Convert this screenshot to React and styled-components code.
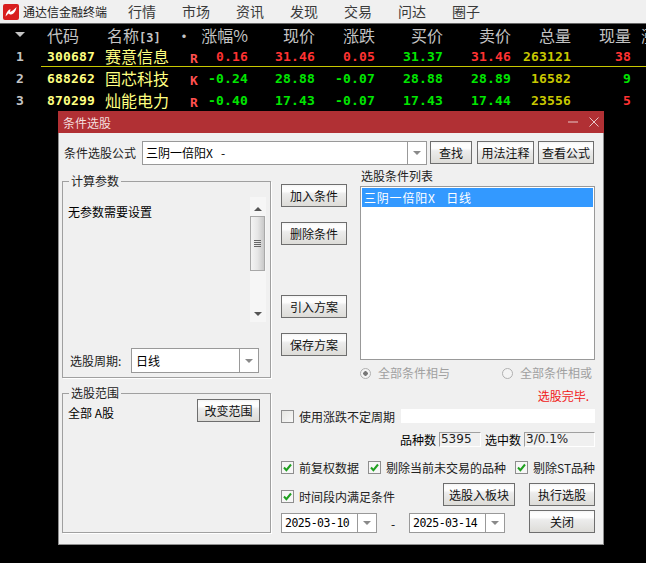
import React from 'react'
import styled, { createGlobalStyle } from 'styled-components'

const columns = '41px 54px 73px 22px 58px 67px 60px 68px 68px 60px 60px 15px'

const headers = [
  { text: '', align: 'center' },
  { text: '代码', align: 'left', pad: 6 },
  { text: '名称', align: 'left', pad: 12, count: '[3]' },
  { text: '•', align: 'left', pad: 8 },
  { text: '涨幅%', align: 'right' },
  { text: '现价', align: 'right' },
  { text: '涨跌', align: 'right' },
  { text: '买价', align: 'right' },
  { text: '卖价', align: 'right' },
  { text: '总量', align: 'right' },
  { text: '现量', align: 'right' },
  { text: '涨', align: 'left', pad: 10, clip: true },
]

const RED = '#ff3232'
const GREEN = '#00e600'

const stocks = [
  { no: 1, code: '300687', name: '赛意信息', flag: 'R', pct: '0.16', price: '31.46', change: '0.05', bid: '31.37', ask: '31.46', vol: '263121', cur: '38', main: RED, changeColor: RED, bidColor: GREEN, askColor: RED, curColor: RED, selected: true },
  { no: 2, code: '688262', name: '国芯科技', flag: 'K', pct: '-0.24', price: '28.88', change: '-0.07', bid: '28.88', ask: '28.89', vol: '16582', cur: '9', main: GREEN, changeColor: GREEN, bidColor: GREEN, askColor: GREEN, curColor: GREEN },
  { no: 3, code: '870299', name: '灿能电力', flag: 'R', pct: '-0.40', price: '17.43', change: '-0.07', bid: '17.43', ask: '17.44', vol: '23556', cur: '5', main: GREEN, changeColor: GREEN, bidColor: GREEN, askColor: GREEN, curColor: RED },
]

const menus = ['行情', '市场', '资讯', '发现', '交易', '问达', '圈子']

const Global = createGlobalStyle`
  html, body { margin: 0; padding: 0; background: #000; }
  body { width: 646px; height: 563px; overflow: hidden; font-family: "Noto Sans CJK SC", "Liberation Sans", sans-serif; }
`

const Page = styled.div`
  position: relative;
  width: 646px;
  height: 563px;
  background: #000;
  overflow: hidden;
`

const TopBar = styled.div`
  display: flex;
  align-items: center;
  height: 23px;
  background: #f0f0f0;
  border-bottom: 1px solid #666;
  padding-left: 3px;
`

const Logo = styled.svg`
  width: 16px;
  height: 16px;
  margin-right: 4px;
`

const AppName = styled.span`
  font-size: 12px;
  color: #222;
  margin-right: 21px;
  line-height: 23px;
`

const MenuItem = styled.span`
  font-size: 14px;
  line-height: 23px;
  color: #3a3a3a;
  width: 54px;
`

const Row = styled.div`
  display: grid;
  grid-template-columns: ${columns};
  height: ${p => p.$height}px;
  align-items: center;
  font-size: 16px;
`

const HeadCell = styled.div`
  color: #c4c4c4;
  font-size: 16px;
  line-height: 20px;
  text-align: ${p => p.$align};
  padding-left: ${p => p.$pad || 0}px;
  white-space: nowrap;
  overflow: ${p => (p.$clip ? 'hidden' : 'visible')};
`

const Count = styled.span`
  font: bold 12px "DejaVu Sans Mono", monospace;
`

const SortArrow = styled.i`
  display: block;
  width: 0;
  height: 0;
  margin-left: 15px;
  border-left: 5px solid transparent;
  border-right: 5px solid transparent;
  border-top: 5px solid #c4c4c4;
`

const DataRow = styled(Row)`
  position: relative;
  ${p => p.$selected && `
    &::after {
      content: '';
      position: absolute;
      left: 41px;
      right: 0;
      bottom: 0;
      height: 1px;
      background: #c8c800;
    }
  `}
`

const Num = styled.div`
  font: bold 13px "DejaVu Sans Mono", monospace;
  letter-spacing: 0.17px;
  color: ${p => p.$color};
  text-align: right;
  white-space: nowrap;
`

const Index = styled(Num)`
  text-align: left;
  padding-left: 16px;
  color: #c4c4c4;
`

const Name = styled.div`
  color: #ffff80;
  font-size: 16px;
  line-height: 20px;
  padding-left: 10px;
  white-space: nowrap;
`

const Flag = styled.div`
  font: bold 13px "DejaVu Sans Mono", monospace;
  color: #ff5050;
  padding: 5px 0 0 22px;
  width: 0;
`

const Dialog = styled.div`
  position: absolute;
  left: 58px;
  top: 111px;
  width: 546px;
  height: 434px;
  box-sizing: border-box;
  background: #f0f0f0;
  border: 1px solid #8f8f8f;
  border-top: 0;
  color: #000;
  font-size: 12px;
`

const TitleBar = styled.div`
  display: flex;
  align-items: center;
  justify-content: space-between;
  height: 22px;
  margin: 0 -1px;
  padding: 0 4px 0 5px;
  background: #b13034;
  color: #f4dede;
  font-size: 12px;
`

const TitleIcons = styled.svg`
  width: 34px;
  height: 12px;
`

const Body = styled.div`
  position: relative;
  padding: 8px 9px 0 3px;
`

const FormulaRow = styled.div`
  display: flex;
  align-items: flex-start;
  height: 26px;
`

const FormulaLabel = styled.span`
  width: 81px;
  padding-left: 2px;
  box-sizing: border-box;
  line-height: 24px;
  color: #222;
`

const Combo = styled.div`
  display: flex;
  box-sizing: border-box;
  width: ${p => p.$width}px;
  height: ${p => p.$height}px;
  background: #fff;
  border: 1px solid #999;
  margin-right: ${p => p.$gap || 0}px;
  flex: none;
`

const ComboText = styled.span`
  flex: 1;
  padding-left: ${p => p.$pad || 3}px;
  line-height: ${p => p.$height - 2}px;
  font-size: 12px;
  white-space: pre;
`

const ComboButton = styled.span`
  display: flex;
  align-items: center;
  justify-content: center;
  width: 18px;
  border-left: 1px solid #999;
  &::before {
    content: '';
    border-left: 4px solid transparent;
    border-right: 4px solid transparent;
    border-top: 4px solid #8a8a8a;
  }
`

const Button = styled.button`
  display: block;
  box-sizing: border-box;
  flex: none;
  width: ${p => p.$width}px;
  height: 23px;
  padding: 0;
  margin: ${p => p.$margin || 0};
  border: 1px solid #6e6e6e;
  border-radius: 0;
  background: linear-gradient(#f4f4f4 0, #fdfdfd 12%, #fdfdfd 30%, #ececec 42%, #dddcd8 100%);
  color: #111;
  font: 12px "Noto Sans CJK SC", sans-serif;
  line-height: 20px;
`

const Columns = styled.div`
  display: flex;
  margin-top: 8px;
`

const LeftColumn = styled.div`
  width: 209px;
  margin-right: 10px;
  flex: none;
`

const Group = styled.fieldset`
  position: relative;
  box-sizing: border-box;
  width: 209px;
  height: ${p => p.$height}px;
  margin: ${p => p.$top || 0}px 0 0;
  padding: 0;
  border: 1px solid #a0a0a0;
  box-shadow: 1px 1px 0 #fff;
`

const Legend = styled.legend`
  margin-left: 6px;
  padding: 0 2px;
  font-size: 12px;
  line-height: 12px;
  color: #222;
`

const ParamHint = styled.div`
  padding: 18px 0 0 5px;
  line-height: 14px;
`

const ScrollBar = styled.div`
  position: absolute;
  left: 187px;
  top: 10px;
  width: 16px;
  height: 125px;
  background: #f6f6f6;
`

const ScrollArrow = styled.i`
  position: absolute;
  left: 4px;
  ${p => (p.$down ? 'bottom: 6px;' : 'top: 10px;')}
  border-left: 4px solid transparent;
  border-right: 4px solid transparent;
  ${p => (p.$down ? 'border-top' : 'border-bottom')}: 4px solid #555;
`

const ScrollThumb = styled.div`
  position: absolute;
  left: 0;
  top: 19px;
  width: 15px;
  height: 55px;
  box-sizing: border-box;
  border: 1px solid #a8a8a8;
  background: linear-gradient(90deg, #f4f4f4, #e6e6e6 50%, #c8c8c8);
  &::after {
    content: '';
    position: absolute;
    left: 3px;
    top: 23px;
    width: 7px;
    height: 7px;
    background: repeating-linear-gradient(#666 0 1px, transparent 1px 2px);
  }
`

const PeriodRow = styled.div`
  position: absolute;
  left: 7px;
  bottom: 4px;
  display: flex;
  align-items: center;
`

const PeriodLabel = styled.span`
  width: 61px;
  color: #222;
`

const RangeRow = styled.div`
  display: flex;
  align-items: center;
  justify-content: space-between;
  padding: 0 10px 0 5px;
`

const RangeLabel = styled.span`
  padding-top: 3px;
`

const RightColumn = styled.div`
  width: 314px;
  flex: none;
`

const TopPart = styled.div`
  display: flex;
`

const SideButtons = styled.div`
  width: 79px;
  flex: none;
  padding-top: 9px;
`

const ListPart = styled.div`
  width: 235px;
`

const ListTitle = styled.div`
  line-height: 12px;
  margin: -5px 0 4px 1px;
  color: #222;
`

const List = styled.div`
  box-sizing: border-box;
  height: 174px;
  background: #fff;
  border: 1px solid #999;
  padding: 1px;
`

const ListItem = styled.div`
  height: 19px;
  line-height: 19px;
  padding-left: 2px;
  background: #3399ff;
  color: #fff;
  letter-spacing: 0.8px;
  white-space: pre;
`

const RadioRow = styled.div`
  display: flex;
  justify-content: space-between;
  margin-top: 6px;
  padding: 0 3px 0 79px;
  height: 14px;
  line-height: 14px;
`

const RadioItem = styled.label`
  display: flex;
  align-items: center;
  gap: 7px;
  color: #a0a0a0;
`

const RadioDot = styled.i`
  box-sizing: border-box;
  width: 11px;
  height: 11px;
  border-radius: 50%;
  border: 1px solid #b0b0b0;
  background: ${p => (p.$on ? 'radial-gradient(circle, #777 0 2px, #f4f4f4 2.5px)' : '#f4f4f4')};
`

const DoneText = styled.div`
  text-align: right;
  color: #f01818;
  line-height: 14px;
  margin-top: 9px;
  padding-right: 6px;
`

const Line = styled.div`
  display: flex;
  align-items: center;
  height: 14px;
  margin-top: ${p => p.$top}px;
  white-space: nowrap;
`

const CheckItem = styled.label`
  display: flex;
  align-items: center;
  color: #222;
  margin-right: ${p => p.$gap || 0}px;
  flex: none;
`

const CheckBox = styled.span`
  display: flex;
  align-items: center;
  justify-content: center;
  box-sizing: border-box;
  width: 13px;
  height: 13px;
  margin-right: 5px;
  border: 1px solid #8e8e8e;
  background: ${p => (p.$checked ? '#f6f6f6' : 'linear-gradient(135deg, #e6e6e2, #f8f8f8)')};
`

const Blank = styled.div`
  width: 194px;
  height: 14px;
  margin-left: 6px;
  background: #fff;
`

const StatsRow = styled(Line)`
  justify-content: flex-end;
`

const StatBox = styled.div`
  box-sizing: border-box;
  width: ${p => p.$width}px;
  height: 15px;
  line-height: 13px;
  margin: 0 ${p => p.$gap || 0}px 0 3px;
  padding-left: 1px;
  border: 1px solid;
  border-color: #a0a0a0 #fff #fff #a0a0a0;
  font-family: "DejaVu Sans", sans-serif;
  color: #222;
`

const BottomGrid = styled.div`
  display: grid;
  grid-template-columns: 162px 86px 66px;
  grid-template-rows: 23px 23px;
  row-gap: 4px;
  margin-top: 9px;
`

const DateRow = styled.div`
  display: flex;
  grid-column: 1 / 3;
  align-items: flex-start;
  padding-top: 3px;
`

const Dash = styled.span`
  width: 32px;
  text-align: center;
  line-height: 22px;
`

const DateText = styled(ComboText)`
  font-family: "DejaVu Sans Mono", monospace;
  font-size: 11.5px;
  letter-spacing: -0.5px;
`

const Check = () => (
  <svg width="9" height="9" viewBox="0 0 9 9">
    <path d="M1 4.5 L3.4 7.2 L8 1.5" fill="none" stroke="#1fa01f" strokeWidth="2" />
  </svg>
)

const CheckOption = ({ text, checked, gap }) => (
  <CheckItem $gap={gap}>
    <CheckBox $checked={checked}>{checked && <Check />}</CheckBox>
    {text}
  </CheckItem>
)

const ComboBox = ({ text, width, height, gap, pad, date }) => {
  const Label = date ? DateText : ComboText
  return (
    <Combo $width={width} $height={height} $gap={gap}>
      <Label $height={height} $pad={pad}>{text}</Label>
      <ComboButton />
    </Combo>
  )
}

const App = () => {
  return (
    <Page>
      <Global />
      <TopBar>
        <Logo viewBox="0 0 16 16">
          <rect width="16" height="16" rx="2" fill="#d81e1e" />
          <path d="M2.5 12.5 C3 8.5 5 6 7.5 5 L7 8 C9 7.5 11 5.5 13.5 3 C13 6.5 11 10.5 8 10.5 C7 10.5 6 10 5.5 9.5 C4.5 10.5 3.5 11.5 2.5 12.5Z" fill="#fff" />
        </Logo>
        <AppName>通达信金融终端</AppName>
        {menus.map(m => <MenuItem key={m}>{m}</MenuItem>)}
      </TopBar>

      <Row $height={21}>
        {headers.map((h, i) => (
          <HeadCell key={i} $align={h.align} $pad={h.pad} $clip={h.clip}>
            {i === 0 ? <SortArrow /> : h.text}
            {h.count && <Count>{h.count}</Count>}
          </HeadCell>
        ))}
      </Row>

      {stocks.map(s => (
        <DataRow key={s.no} $height={22} $selected={s.selected}>
          <Index>{s.no}</Index>
          <Num $color="#ffff80">{s.code}</Num>
          <Name>{s.name}</Name>
          <Flag>{s.flag}</Flag>
          <Num $color={s.main}>{s.pct}</Num>
          <Num $color={s.main}>{s.price}</Num>
          <Num $color={s.changeColor}>{s.change}</Num>
          <Num $color={s.bidColor}>{s.bid}</Num>
          <Num $color={s.askColor}>{s.ask}</Num>
          <Num $color="#c8c800">{s.vol}</Num>
          <Num $color={s.curColor}>{s.cur}</Num>
        </DataRow>
      ))}

      <Dialog>
        <TitleBar>
          条件选股
          <TitleIcons viewBox="0 0 34 12">
            <path d="M2 6 H12" stroke="#e8c8c8" fill="none" />
            <path d="M23.5 1.5 L32.5 10.5 M32.5 1.5 L23.5 10.5" stroke="#e8c8c8" fill="none" />
          </TitleIcons>
        </TitleBar>
        <Body>
          <FormulaRow>
            <FormulaLabel>条件选股公式</FormulaLabel>
            <ComboBox text="三阴一倍阳X   -" width={285} height={24} gap={3} />
            <Button $width={42}>查找</Button>
            <Button $width={57} $margin="0 4px 0 5px">用法注释</Button>
            <Button $width={56}>查看公式</Button>
          </FormulaRow>

          <Columns>
            <LeftColumn>
              <Group $height={203}>
                <Legend>计算参数</Legend>
                <ParamHint>无参数需要设置</ParamHint>
                <ScrollBar>
                  <ScrollArrow />
                  <ScrollThumb />
                  <ScrollArrow $down />
                </ScrollBar>
                <PeriodRow>
                  <PeriodLabel>选股周期:</PeriodLabel>
                  <ComboBox text="日线" width={128} height={25} pad={4} />
                </PeriodRow>
              </Group>
              <Group $height={146} $top={9}>
                <Legend>选股范围</Legend>
                <RangeRow>
                  <RangeLabel>全部 A股</RangeLabel>
                  <Button $width={63}>改变范围</Button>
                </RangeRow>
              </Group>
            </LeftColumn>

            <RightColumn>
              <TopPart>
                <SideButtons>
                  <Button $width={66}>加入条件</Button>
                  <Button $width={66} $margin="15px 0 0">删除条件</Button>
                  <Button $width={66} $margin="50px 0 0">引入方案</Button>
                  <Button $width={66} $margin="15px 0 0">保存方案</Button>
                </SideButtons>
                <ListPart>
                  <ListTitle>选股条件列表</ListTitle>
                  <List>
                    <ListItem>三阴一倍阳X   日线</ListItem>
                  </List>
                </ListPart>
              </TopPart>

              <RadioRow>
                <RadioItem><RadioDot $on />全部条件相与</RadioItem>
                <RadioItem><RadioDot />全部条件相或</RadioItem>
              </RadioRow>
              <DoneText>选股完毕.</DoneText>
              <Line $top={6}>
                <CheckOption text="使用涨跌不定周期" />
                <Blank />
              </Line>
              <StatsRow $top={9}>
                品种数<StatBox $width={42} $gap={4}>5395</StatBox>
                选中数<StatBox $width={71}>3/0.1%</StatBox>
              </StatsRow>
              <Line $top={14}>
                <CheckOption text="前复权数据" checked gap={9} />
                <CheckOption text="剔除当前未交易的品种" checked gap={9} />
                <CheckOption text="剔除ST品种" checked />
              </Line>
              <BottomGrid>
                <Line $top={6}>
                  <CheckOption text="时间段内满足条件" checked />
                </Line>
                <Button $width={72}>选股入板块</Button>
                <Button $width={66}>执行选股</Button>
                <DateRow>
                  <ComboBox text="2025-03-10" width={96} height={20} date />
                  <Dash>-</Dash>
                  <ComboBox text="2025-03-14" width={96} height={20} date />
                </DateRow>
                <Button $width={66}>关闭</Button>
              </BottomGrid>
            </RightColumn>
          </Columns>
        </Body>
      </Dialog>
    </Page>
  )
}

export default App
